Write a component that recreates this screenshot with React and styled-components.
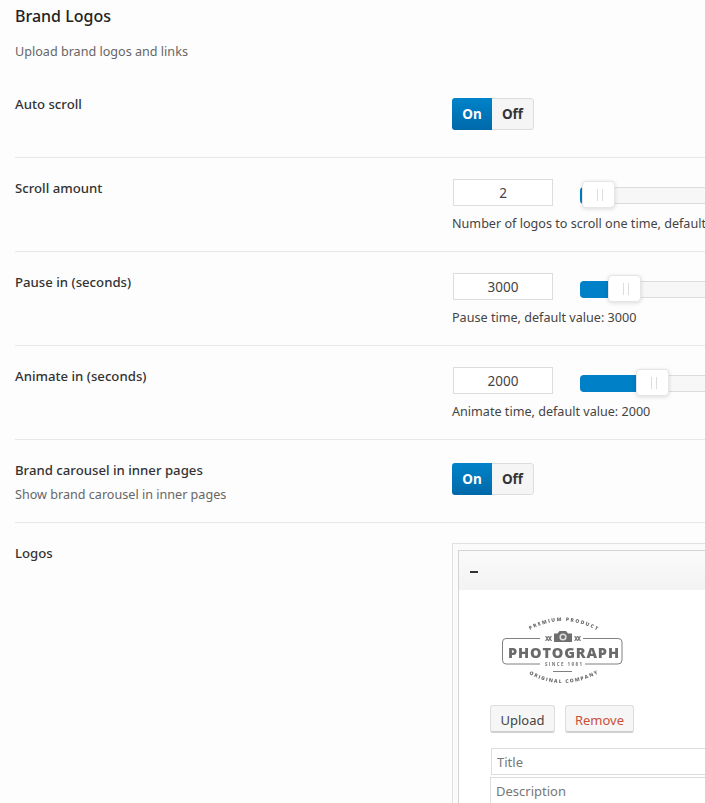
import React from 'react';
import styled, { createGlobalStyle } from 'styled-components';

const Global = createGlobalStyle`
html, body {
    margin: 0;
    padding: 0;
    background: #fdfdfd;
}
* {
    box-sizing: border-box;
}
`

const Page = styled.div`
width: 705px;
height: 803px;
overflow: hidden;
padding-left: 15px;
font-family: "Noto Sans", "Open Sans", sans-serif;
font-size: 12.6px;
color: #333;
`

const Header = styled.div`
height: 74px;
`

const Title = styled.h2`
margin: 0;
padding-top: 5px;
font-size: 16px;
line-height: 22px;
font-weight: 500;
color: #222;
`

const Subtitle = styled.p`
margin: 14px 0 0;
font-size: 12.6px;
line-height: 22px;
color: #666;
`

const Row = styled.div`
display: flex;
width: 900px;
height: ${p => p.$height}px;
border-bottom: 1px solid #e8e8e8;
${p => p.$last && 'border-bottom: none;'}
`

const LabelCol = styled.div`
width: 437px;
flex-shrink: 0;
padding-top: 21px;
`

const ControlCol = styled.div`
padding-top: ${p => p.$top}px;
`

const Label = styled.div`
font-size: 13.2px;
line-height: 18px;
font-weight: 500;
color: #333;
`

const Hint = styled.div`
margin-top: 7px;
font-size: 12.6px;
line-height: 18px;
color: #666;
`

const Toggle = styled.div`
display: flex;
width: 82px;
height: 32px;
border-radius: 3px;
overflow: hidden;
font-size: 13.5px;
line-height: 33px;
font-weight: 700;
text-align: center;
`

const ToggleOn = styled.div`
width: 40px;
color: #fff;
background: linear-gradient(#0083c9, #0069a9);
`

const ToggleOff = styled.div`
flex: 1;
color: #333;
background: #f5f5f5;
border: 1px solid #ddd;
border-left: none;
border-radius: 0 3px 3px 0;
line-height: 31px;
`

const Controls = styled.div`
display: flex;
align-items: flex-start;
padding-left: 1px;
`

const NumberBox = styled.input`
width: 100px;
height: 27px;
border: 1px solid #ddd;
background: #fff;
text-align: center;
font-family: inherit;
font-size: 13.5px;
color: #444;
padding: 0;
outline: none;
`

const Track = styled.div`
position: relative;
width: 300px;
height: 17px;
margin: 8px 0 0 27px;
background: #f7f7f7;
border: 1px solid #ddd;
border-radius: 4px;
`

const Fill = styled.div`
position: absolute;
left: -1px;
top: -1px;
bottom: -1px;
background: #0080c6;
border-radius: 4px 0 0 4px;
`

const Handle = styled.div`
position: absolute;
top: -7px;
width: 33px;
height: 27px;
background: #fff;
border: 1px solid #e6e6e6;
border-radius: 4px;
box-shadow: 0 1px 4px rgba(0, 0, 0, 0.14);
&::after {
    content: '';
    position: absolute;
    left: 14px;
    top: 7px;
    width: 4px;
    height: 12px;
    border-left: 1px solid #ddd;
    border-right: 1px solid #ddd;
}
`

const Note = styled.div`
margin-top: 9px;
font-size: 12.6px;
line-height: 18px;
color: #444;
white-space: nowrap;
`

const Repeater = styled.div`
width: 300px;
height: 400px;
padding: 6px 5px;
background: #fbfbfb;
border: 1px solid #e2e2e2;
`

const Panel = styled.div`
height: 100%;
background: #fff;
border: 1px solid #d4d4d4;
border-right: none;
`

const PanelHead = styled.div`
height: 39px;
padding-left: 11px;
display: flex;
align-items: center;
background: linear-gradient(#fafafa, #f3f3f3);
`

const Minus = styled.span`
display: block;
width: 8px;
height: 2px;
margin-top: 3px;
background: #333;
`

const PanelBody = styled.div`
padding: 20px 0 0 36px;
`

const LogoSvg = styled.svg`
display: block;
width: 130px;
height: 80px;
filter: blur(0.3px);
`

const Buttons = styled.div`
display: flex;
gap: 10px;
margin: 15px 0 15px -5px;
`

const Button = styled.button`
height: 28px;
width: ${p => p.$width}px;
padding: 2px 0 0;
background: #f6f6f6;
border: 1px solid #ddd;
border-bottom: 2px solid #cfcfcf;
border-radius: 3px;
font-family: inherit;
font-size: 13px;
color: ${p => p.$danger ? '#c9503a' : '#444'};
`

const TextField = styled.input`
display: block;
width: 300px;
height: 27px;
margin: 0 0 2px ${p => p.$shift || 0}px;
padding: 1px 5px 0;
background: #fff;
border: 1px solid #ddd;
font-family: inherit;
font-size: 13px;
outline: none;
&::placeholder {
    color: #777;
}
`

function Switch() {
    return (
        <Toggle>
            <ToggleOn>On</ToggleOn>
            <ToggleOff>Off</ToggleOff>
        </Toggle>
    )
}

function Slider({ value, fill, note }) {
    return (
        <>
            <Controls>
                <NumberBox readOnly value={value} />
                <Track>
                    <Fill style={{ width: fill + 4 }} />
                    <Handle style={{ left: fill }} />
                </Track>
            </Controls>
            <Note>{note}</Note>
        </>
    )
}

function PhotographLogo() {
    return (
        <LogoSvg viewBox="0 0 130 80">
            <defs>
                <path id="arcTop" d="M35 20 Q67.5 2 101 20" />
                <path id="arcBottom" d="M34 64 Q67.5 82 102 64" />
            </defs>
            <g fill="none" stroke="#808080" strokeWidth="1">
                <path d="M45 28.5 H11 Q7.5 28.5 7.5 32 V50 Q7.5 54 11 54 H45" />
                <path d="M88 28.5 H123 Q127 28.5 127 32 V50 Q127 54 123 54 H90" />
                <path d="M58 61.5 H77" />
            </g>
            <text fill="#6e6e6e" fontFamily="Open Sans" fontSize="5" fontWeight="800">
                <textPath href="#arcTop" textLength="70">PREMIUM PRODUCT</textPath>
            </text>
            <text fill="#6e6e6e" fontFamily="Open Sans" fontSize="5" fontWeight="800">
                <textPath href="#arcBottom" textLength="72">ORIGINAL COMPANY</textPath>
            </text>
            <text x="50" y="30.5" fill="#777" fontFamily="Open Sans" fontSize="6" fontWeight="800" textLength="7">XX</text>
            <text x="79" y="30.5" fill="#777" fontFamily="Open Sans" fontSize="6" fontWeight="800" textLength="7">XX</text>
            <path d="M59 23.5 H62.5 L64.5 21 H71 L73 23.5 H77 V32 H59 Z" fill="#6e6e6e" />
            <circle cx="68" cy="27" r="3.6" fill="#ddd" />
            <circle cx="68" cy="27" r="2" fill="#6e6e6e" />
            <text x="13" y="48" fill="#6a6a6a" fontFamily="Open Sans" fontSize="14.5" fontWeight="800" textLength="111">PHOTOGRAPH</text>
            <text x="50" y="56" fill="#777" fontFamily="Open Sans" fontSize="4.5" fontWeight="700" textLength="37">SINCE 1981</text>
        </LogoSvg>
    )
}

export default function App() {
    return (
        <Page>
            <Global />
            <Header>
                <Title>Brand Logos</Title>
                <Subtitle>Upload brand logos and links</Subtitle>
            </Header>

            <Row $height={84}>
                <LabelCol><Label>Auto scroll</Label></LabelCol>
                <ControlCol $top={24}><Switch /></ControlCol>
            </Row>
            <Row $height={94}>
                <LabelCol><Label>Scroll amount</Label></LabelCol>
                <ControlCol $top={21}>
                    <Slider value="2" fill={1} note="Number of logos to scroll one time, default value: 2" />
                </ControlCol>
            </Row>
            <Row $height={94}>
                <LabelCol><Label>Pause in (seconds)</Label></LabelCol>
                <ControlCol $top={21}>
                    <Slider value="3000" fill={27} note="Pause time, default value: 3000" />
                </ControlCol>
            </Row>
            <Row $height={94}>
                <LabelCol><Label>Animate in (seconds)</Label></LabelCol>
                <ControlCol $top={21}>
                    <Slider value="2000" fill={55} note="Animate time, default value: 2000" />
                </ControlCol>
            </Row>
            <Row $height={83}>
                <LabelCol>
                    <Label>Brand carousel in inner pages</Label>
                    <Hint>Show brand carousel in inner pages</Hint>
                </LabelCol>
                <ControlCol $top={23}><Switch /></ControlCol>
            </Row>
            <Row $height={400} $last>
                <LabelCol><Label>Logos</Label></LabelCol>
                <ControlCol $top={20}>
                    <Repeater>
                        <Panel>
                            <PanelHead><Minus /></PanelHead>
                            <PanelBody>
                                <PhotographLogo />
                                <Buttons>
                                    <Button $width={65}>Upload</Button>
                                    <Button $width={69} $danger>Remove</Button>
                                </Buttons>
                                <TextField placeholder="Title" $shift={-4} />
                                <TextField placeholder="Description" $shift={-5} />
                            </PanelBody>
                        </Panel>
                    </Repeater>
                </ControlCol>
            </Row>
        </Page>
    )
}
